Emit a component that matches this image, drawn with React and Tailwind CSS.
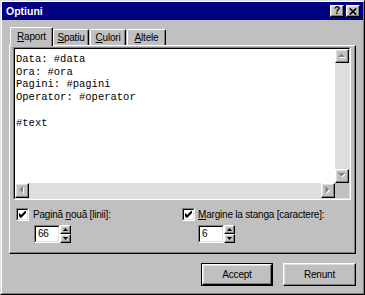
import React from "react";

const raised =
  "bg-[#c0c0c0] border border-t-white border-l-white border-r-black border-b-black shadow-[inset_-1px_-1px_0_#808080,inset_1px_1px_0_#dfdfdf]";

function ArrowBtn({ dir }) {
  const pts = {
    up: "0,4 7,4 3.5,0.5",
    down: "0,0 7,0 3.5,3.5",
    left: "4,0 4,7 0.5,3.5",
    right: "0,0 0,7 3.5,3.5",
  }[dir];
  const vertical = dir === "up" || dir === "down";
  const w = vertical ? 8 : 5;
  const h = vertical ? 5 : 8;
  return (
    <div className={`${raised} w-[14px] h-[14px] flex items-center justify-center shrink-0`}>
      <svg width={w + 1} height={h + 1} viewBox={`0 0 ${w + 1} ${h + 1}`}>
        <polygon points={pts} fill="#ffffff" transform="translate(1,1)" />
        <polygon points={pts} fill="#808080" />
      </svg>
    </div>
  );
}

function CheckBox() {
  return (
    <div className="w-[13px] h-[13px] border border-t-[#808080] border-l-[#808080] border-r-white border-b-white shrink-0">
      <div className="w-full h-full border border-t-black border-l-black border-r-[#dfdfdf] border-b-[#dfdfdf] bg-white flex items-center justify-center">
        <svg width="7" height="7" viewBox="0 0 7 7">
          <path d="M0 2 L2 4 L6 0 L7 0 L7 2 L2 7 L0 5 Z" fill="#000" />
          <path d="M0 2 L0 5 L2 7 L2 4 Z" fill="#000" />
        </svg>
      </div>
    </div>
  );
}

function Spin({ value }) {
  return (
    <div className="flex">
      <div className="w-[26px] h-[18px] border border-t-[#808080] border-l-[#808080] border-r-white border-b-white">
        <div className="w-full h-full border border-t-black border-l-black border-r-[#dfdfdf] border-b-[#dfdfdf] bg-white text-[10px] leading-[14px] pl-[2px] text-black">
          {value}
        </div>
      </div>
      <div className="flex flex-col w-[11px] h-[18px]">
        <div className={`${raised} h-[9px] flex items-center justify-center`}>
          <svg width="5" height="3" viewBox="0 0 5 3">
            <polygon points="0,3 5,3 2.5,0" fill="#000" />
          </svg>
        </div>
        <div className={`${raised} h-[9px] flex items-center justify-center`}>
          <svg width="5" height="3" viewBox="0 0 5 3">
            <polygon points="0,0 5,0 2.5,3" fill="#000" />
          </svg>
        </div>
      </div>
    </div>
  );
}

export default function App() {
  return (
    <div className="w-[365px] h-[295px] bg-[#c0c0c0] border border-t-[#dfdfdf] border-l-[#dfdfdf] border-r-black border-b-black font-['Liberation_Sans',Arial,sans-serif] text-black">
      <div className="h-full border border-t-white border-l-white border-r-[#808080] border-b-[#808080] flex flex-col">
        {/* Title bar */}
        <div className="h-[18px] bg-[#000080] flex items-center pl-[4px] pr-[3px] shrink-0">
          <span className="text-white font-bold text-[10.5px] leading-[12px] flex-1">Optiuni</span>
          <div className={`${raised} w-[14px] h-[12px] flex items-center justify-center`}>
            <span className="font-bold text-[10px] leading-[10px]">?</span>
          </div>
          <div className={`${raised} w-[14px] h-[12px] flex items-center justify-center ml-[2px]`}>
            <svg width="8" height="7" viewBox="0 0 8 7">
              <path d="M0.8 0.5 L7.2 6.5 M7.2 0.5 L0.8 6.5" stroke="#000" strokeWidth="1.7" />
            </svg>
          </div>
        </div>

        <div className="flex flex-col px-[7px] pt-[7px] text-[10px] tracking-[-0.2px]">
          {/* Tabs */}
          <div className="h-[18px] flex items-end pl-[1px]">
            <div className="relative z-10 w-[43px] h-[19px] mb-[-1px] bg-[#c0c0c0] border-l border-t border-r border-l-white border-t-white border-r-black rounded-t-[2px] shadow-[inset_-1px_0_0_#808080] flex justify-center pt-[3px] leading-[12px]">
              <span>
                <span className="underline">R</span>aport
              </span>
            </div>
            <div className="w-[36px] h-[16px] border-l border-t border-r border-l-white border-t-white border-r-black rounded-t-[2px] shadow-[inset_-1px_0_0_#808080] flex justify-center pt-[2px] leading-[12px]">
              <span>
                <span className="underline">S</span>patiu
              </span>
            </div>
            <div className="ml-[1px] w-[36px] h-[16px] border-l border-t border-r border-l-white border-t-white border-r-black rounded-t-[2px] shadow-[inset_-1px_0_0_#808080] flex justify-center pt-[2px] leading-[12px]">
              <span>
                <span className="underline">C</span>ulori
              </span>
            </div>
            <div className="ml-[1px] w-[39px] h-[16px] border-l border-t border-r border-l-white border-t-white border-r-black rounded-t-[2px] shadow-[inset_-1px_0_0_#808080] flex justify-center pt-[2px] leading-[12px]">
              <span>
                <span className="underline">A</span>ltele
              </span>
            </div>
          </div>

          {/* Panel */}
          <div className="h-[209px] border border-t-white border-l-white border-r-black border-b-black shadow-[inset_-1px_-1px_0_#808080] flex flex-col">
            {/* Text area */}
            <div className="ml-[3px] mt-[1px] w-[338px] h-[153px] border border-t-[#808080] border-l-[#808080] border-r-white border-b-white">
              <div className="w-full h-full border border-t-black border-l-black border-r-[#dfdfdf] border-b-[#dfdfdf] flex flex-col">
                <div className="flex flex-1 min-h-0">
                  <div className="flex-1 bg-white pt-[4px] pl-[1px] font-['Liberation_Mono','Courier_New',monospace] text-[10.5px] leading-[12.7px] tracking-normal whitespace-pre text-black">
                    {"Data: #data\nOra: #ora\nPagini: #pagini\nOperator: #operator\n\n#text"}
                  </div>
                  <div className="w-[14px] flex flex-col bg-[#dedede]">
                    <ArrowBtn dir="up" />
                    <div className="flex-1" />
                    <ArrowBtn dir="down" />
                  </div>
                </div>
                <div className="h-[15px] flex shrink-0">
                  <div className="flex-1 flex bg-[#dedede]">
                    <div className="h-[15px] flex">
                      <div className={`${raised} w-[14px] h-[15px] flex items-center justify-center`}>
                        <svg width="6" height="9" viewBox="0 0 6 9">
                          <polygon points="4,0 4,7 0.5,3.5" fill="#fff" transform="translate(1,1)" />
                          <polygon points="4,0 4,7 0.5,3.5" fill="#808080" />
                        </svg>
                      </div>
                    </div>
                    <div className="flex-1" />
                    <div className={`${raised} w-[14px] h-[15px] flex items-center justify-center`}>
                      <svg width="6" height="9" viewBox="0 0 6 9">
                        <polygon points="0.5,0 0.5,7 4,3.5" fill="#fff" transform="translate(1,1)" />
                        <polygon points="0.5,0 0.5,7 4,3.5" fill="#808080" />
                      </svg>
                    </div>
                  </div>
                  <div className="w-[14px] bg-[#c0c0c0]" />
                </div>
              </div>
            </div>

            {/* Options */}
            <div className="flex mt-[8px] pl-[6px]">
              <div className="w-[166px] flex flex-col">
                <div className="flex items-center h-[13px]">
                  <CheckBox />
                  <span className="ml-[4px] leading-[12px]">
                    Pagină <span className="underline">n</span>ouă [linii]:
                  </span>
                </div>
                <div className="mt-[4px] ml-[18px]">
                  <Spin value="66" />
                </div>
              </div>
              <div className="flex flex-col">
                <div className="flex items-center h-[13px]">
                  <CheckBox />
                  <span className="ml-[3px] leading-[12px]">
                    <span className="underline">M</span>argine la stanga [caractere]:
                  </span>
                </div>
                <div className="mt-[4px] ml-[16px]">
                  <Spin value="6" />
                </div>
              </div>
            </div>
          </div>

          {/* Buttons */}
          <div className="mt-[9px] flex justify-end gap-[10px]">
            <div className="w-[72px] h-[23px] border border-black">
              <div className={`${raised} w-full h-full flex items-center justify-center`}>Accept</div>
            </div>
            <div className={`${raised} w-[73px] h-[23px] flex items-center justify-center`}>Renunt</div>
          </div>
        </div>
      </div>
    </div>
  );
}
